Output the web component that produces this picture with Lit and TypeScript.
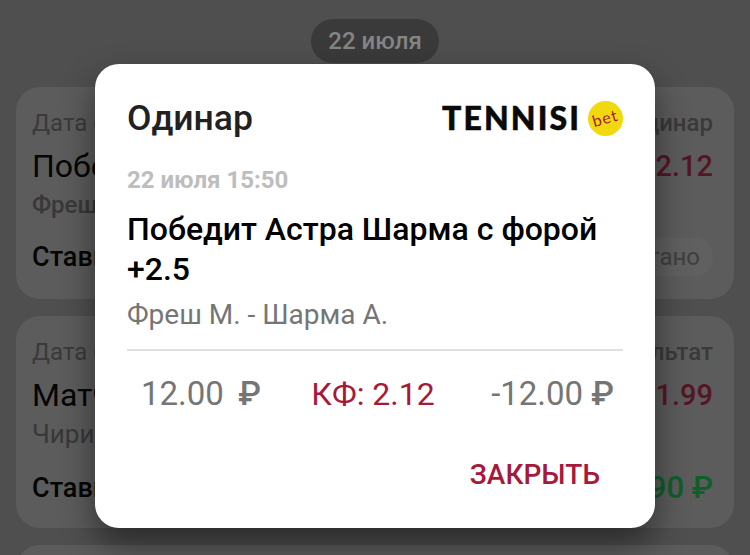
import { LitElement, html, css } from 'lit';
import { customElement } from 'lit/decorators.js';

const RUB = '\u20BD';

@customElement('app-root')
export class AppRoot extends LitElement {
  static styles = css`
    :host {
      display: block;
      position: relative;
      width: 750px;
      height: 555px;
      overflow: hidden;
      background: #4f4f4f;
      font-family: Roboto, sans-serif;
    }

    .list {
      display: flex;
      flex-direction: column;
      align-items: center;
      gap: 17px;
      padding: 19px 16px 0;
    }

    .pill {
      height: 44px;
      margin-bottom: 7px;
      padding: 0 17px;
      border-radius: 22px;
      background: #3a3a3a;
      color: #858585;
      font-size: 24px;
      font-weight: 500;
      line-height: 44px;
    }

    .card {
      box-sizing: border-box;
      width: 100%;
      height: 212px;
      padding: 22px 21px 0 16px;
      border-radius: 24px;
      background: #5c5c5c;
      flex: none;
    }

    .row {
      display: flex;
      justify-content: space-between;
      align-items: center;
      white-space: nowrap;
    }

    /* card text only shows in the strips beside the dialog */
    .left {
      width: 63px;
      overflow: hidden;
      white-space: nowrap;
    }

    .right {
      display: flex;
      justify-content: flex-end;
      width: 58px;
      overflow: hidden;
    }

    .label {
      color: #3a3a3a;
      font-size: 24px;
      line-height: 28px;
    }

    .label .right {
      font-weight: 500;
    }

    .main {
      margin-top: 10px;
      color: #050505;
      font-size: 32px;
      line-height: 38px;
    }

    .odd {
      color: #561524;
      font-size: 29px;
      font-weight: 500;
    }

    .sub {
      margin-top: 5px;
      color: #383838;
      font-size: 24px;
      font-weight: 500;
      line-height: 30px;
    }

    .sub.thin {
      font-weight: 400;
      font-size: 26px;
    }

    .stake {
      margin-top: 18px;
      color: #050505;
      font-size: 27px;
      font-weight: 500;
      line-height: 34px;
    }

    .stake.low {
      margin-top: 22px;
    }

    .state {
      padding: 2px 13px 2px 12px;
      border-radius: 18px;
      background: #606060;
      color: #3f3f3f;
      font-size: 24px;
      font-weight: 400;
    }

    .win {
      color: #0e5f2a;
      font-size: 31px;
    }

    .dialog {
      position: absolute;
      left: 95px;
      top: 64px;
      box-sizing: border-box;
      width: 560px;
      height: 464px;
      padding: 32px 32px 0;
      border-radius: 24px;
      background: #fff;
      box-shadow: 0 16px 34px rgba(0, 0, 0, 0.48);
    }

    .head {
      display: flex;
      justify-content: space-between;
      align-items: center;
      height: 44px;
    }

    .title {
      color: #212121;
      font-size: 35.5px;
      font-weight: 500;
      line-height: 44px;
    }

    .logo {
      display: flex;
      align-items: center;
      gap: 7px;
    }

    .wordmark {
      color: #0a0a0a;
      font-family: Lato, sans-serif;
      font-size: 32px;
      font-weight: 900;
      letter-spacing: 2.1px;
      line-height: 36px;
      -webkit-text-stroke: 0.5px #0a0a0a;
    }

    .ball {
      display: flex;
      justify-content: center;
      align-items: center;
      width: 35px;
      height: 35px;
      border-radius: 50%;
      background: #f0d90f;
    }

    .ball span {
      color: #a6193a;
      font-family: Lato, sans-serif;
      font-size: 16px;
      letter-spacing: 1px;
      line-height: 16px;
      transform: rotate(-16deg);
    }

    .when {
      margin-top: 26px;
      color: #bdbdbd;
      font-size: 24px;
      font-weight: 700;
      line-height: 28px;
    }

    .pick {
      margin-top: 15px;
      color: #000;
      font-size: 32px;
      font-weight: 500;
      line-height: 40px;
    }

    .teams {
      margin-top: 10px;
      color: #757575;
      font-size: 28px;
      line-height: 32px;
    }

    .divider {
      height: 2px;
      margin-top: 18px;
      background: #e0e0e0;
    }

    .stats {
      display: flex;
      justify-content: space-between;
      margin-top: 24px;
      padding: 0 9px 0 14px;
      color: #757575;
      font-size: 33px;
      line-height: 38px;
      white-space: pre;
    }

    .stats .kf {
      margin-right: 6px;
      color: #a6193a;
      font-size: 32px;
    }

    .stats b {
      font-weight: 500;
    }

    .stats b.near {
      margin-left: -2px;
    }

    .actions {
      display: flex;
      justify-content: flex-end;
      margin-top: 45px;
      padding-right: 23px;
    }

    .close {
      padding: 0;
      border: none;
      background: none;
      color: #a6193a;
      font-family: inherit;
      font-size: 28px;
      font-weight: 500;
      line-height: 34px;
    }
  `;

  render() {
    return html`
      <div class="list">
        <div class="pill">22 июля</div>
        <div class="card">
          <div class="row label"><span class="left">Дата события</span><span class="right">Одинар</span></div>
          <div class="row main"><span class="left">Победит</span><span class="right"><span class="odd">2.12</span></span></div>
          <div class="sub left">Фреш М. - Шарма А.</div>
          <div class="row stake"><span class="left">Ставка</span><span class="right"><span class="state">Рассчитано</span></span></div>
        </div>
        <div class="card">
          <div class="row label"><span class="left">Дата события</span><span class="right">Результат</span></div>
          <div class="row main"><span class="left">Матч</span><span class="right"><span class="odd">1.99</span></span></div>
          <div class="sub thin left">Чирико</div>
          <div class="row stake low"><span class="left">Ставка</span><span class="right"><span class="win">23.90 ${RUB}</span></span></div>
        </div>
        <div class="card"></div>
      </div>

      <div class="dialog">
        <div class="head">
          <div class="title">Одинар</div>
          <div class="logo">
            <span class="wordmark">TENNISI</span>
            <span class="ball"><span>bet</span></span>
          </div>
        </div>
        <div class="when">22 июля 15:50</div>
        <div class="pick">Победит Астра Шарма с форой +2.5</div>
        <div class="teams">Фреш М. - Шарма А.</div>
        <div class="divider"></div>
        <div class="stats">
          <span>12.00  <b class="near">${RUB}</b></span>
          <span class="kf">КФ: 2.12</span>
          <span>-12.00 <b>${RUB}</b></span>
        </div>
        <div class="actions"><button class="close">ЗАКРЫТЬ</button></div>
      </div>
    `;
  }
}
